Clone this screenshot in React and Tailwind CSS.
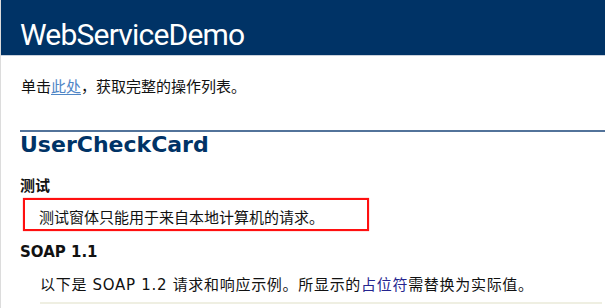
export default function App() {
  return (
    <div className="w-[605px] h-[308px] overflow-hidden bg-white border-l border-[#dcdcdc] font-['DejaVu_Sans','Noto_Sans_CJK_SC',sans-serif] text-[15px] text-[#111]">
      {/* page banner */}
      <div className="h-[56px] bg-[#003366] border-b border-[#c9d1dc] pl-[19px] pt-[20px]">
        <h1 className="font-['Roboto','Noto_Sans_CJK_SC',sans-serif] text-[30px] leading-none tracking-[-0.8px] text-white">WebServiceDemo</h1>
      </div>

      <p className="mt-[21px] ml-[20px] leading-[20px]">
        单击<a href="#" className="text-[#4f86c6] underline underline-offset-2">此处</a>，获取完整的操作列表。
      </p>

      <div className="mt-[33px] ml-[19px] h-[2px] bg-[#52739a]" />
      <h2 className="ml-[19px] text-[22px] leading-[26px] font-bold text-[#003366]">UserCheckCard</h2>

      <h3 className="mt-[18px] ml-[19px] leading-[20px] font-bold">测试</h3>

      <div className="mt-[2px] ml-[22px] w-[346px] h-[33px] border-2 border-[#ff1010] shadow-[0_0_1px_#ff6060] pl-[14px] pt-[8px]">
        <p className="leading-[20px]">测试窗体只能用于来自本地计算机的请求。</p>
      </div>

      <h3 className="mt-[11px] ml-[19px] leading-[20px] font-bold">SOAP 1.1</h3>

      <p className="mt-[13px] ml-[39px] leading-[20px] tracking-[0.7px]">
        以下是 SOAP 1.2 请求和响应示例。所显示的<span className="text-[#25258f]">占位符</span>需替换为实际值。
      </p>

      <div className="mt-[7px] ml-[39px] mr-[3px] h-[2px] bg-[#efefe2]" />
    </div>
  );
}
